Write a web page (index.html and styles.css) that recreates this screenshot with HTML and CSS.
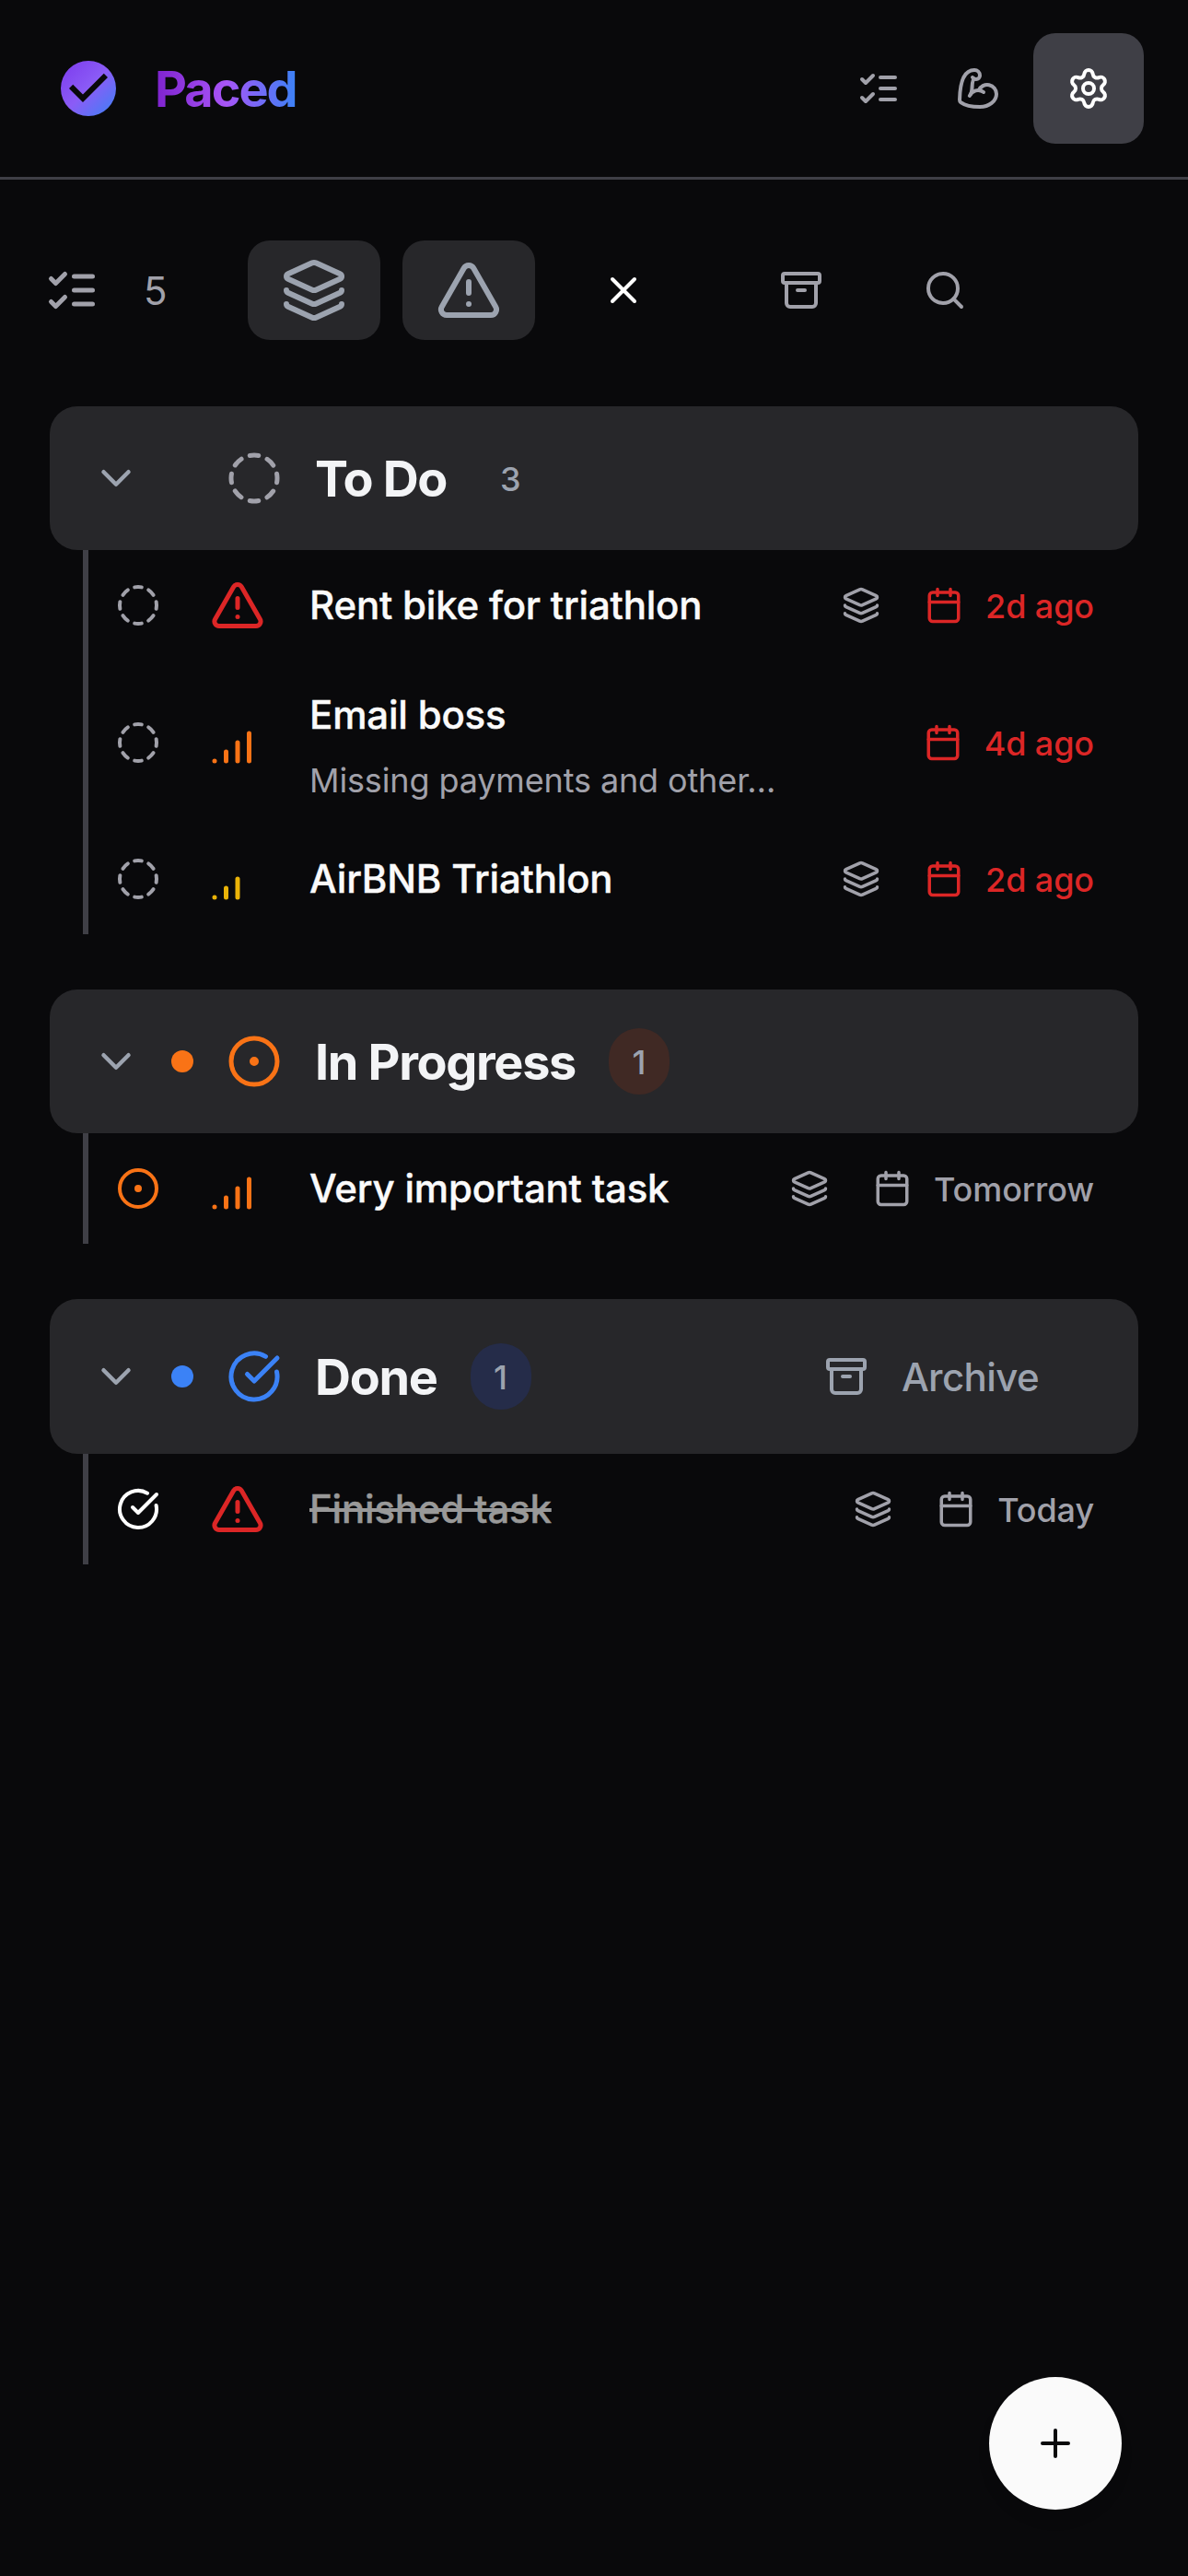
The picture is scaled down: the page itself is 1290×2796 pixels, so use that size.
FILE: index.html
```html
<!DOCTYPE html>
<html lang="en">
<head>
<meta charset="utf-8">
<title>Paced</title>
<link rel="stylesheet" href="styles.css">
</head>
<body>
<svg class="sprite" aria-hidden="true">
  <symbol id="list-checks" viewBox="0 0 24 24"><path d="m3 17 2 2 4-4M3 7l2 2 4-4M13 6h8M13 12h8M13 18h8"/></symbol>
  <symbol id="biceps" viewBox="0 0 24 24"><path d="M12.409 13.017A5 5 0 0 1 22 15c0 3.866-4 7-9 7-4.077 0-8.153-.82-10.371-2.462-.426-.316-.631-.832-.62-1.362C2.118 12.723 2.627 2 10 2a3 3 0 0 1 3 3 2 2 0 0 1-2 2c-1.105 0-1.64-.444-2-1"/><path d="M15 14a5 5 0 0 0-7.584 2"/><path d="M9.964 6.825C8.019 7.977 9.5 13 8 15"/></symbol>
  <symbol id="settings" viewBox="0 0 24 24"><path d="M9.671 4.136a2.34 2.34 0 0 1 4.659 0 2.34 2.34 0 0 0 3.319 1.915 2.34 2.34 0 0 1 2.33 4.033 2.34 2.34 0 0 0 0 3.831 2.34 2.34 0 0 1-2.33 4.033 2.34 2.34 0 0 0-3.319 1.915 2.34 2.34 0 0 1-4.659 0 2.34 2.34 0 0 0-3.32-1.915 2.34 2.34 0 0 1-2.33-4.033 2.34 2.34 0 0 0 0-3.831A2.34 2.34 0 0 1 6.35 6.051a2.34 2.34 0 0 0 3.319-1.915"/><circle cx="12" cy="12" r="3"/></symbol>
  <symbol id="layers" viewBox="0 0 24 24"><path d="M12.83 2.18a2 2 0 0 0-1.66 0L2.6 6.08a1 1 0 0 0 0 1.83l8.58 3.91a2 2 0 0 0 1.66 0l8.58-3.9a1 1 0 0 0 0-1.83z"/><path d="M2 12a1 1 0 0 0 .58.91l8.6 3.91a2 2 0 0 0 1.65 0l8.58-3.9A1 1 0 0 0 22 12"/><path d="M2 17a1 1 0 0 0 .58.91l8.6 3.91a2 2 0 0 0 1.65 0l8.58-3.9A1 1 0 0 0 22 17"/></symbol>
  <symbol id="alert" viewBox="0 0 24 24"><path d="m21.73 18-8-14a2 2 0 0 0-3.48 0l-8 14A2 2 0 0 0 4 21h16a2 2 0 0 0 1.73-3"/><path d="M12 9v4M12 17h.01"/></symbol>
  <symbol id="close" viewBox="0 0 24 24"><path d="M18 6 6 18M6 6l12 12"/></symbol>
  <symbol id="archive" viewBox="0 0 24 24"><rect width="20" height="5" x="2" y="3" rx="1"/><path d="M4 8v11a2 2 0 0 0 2 2h12a2 2 0 0 0 2-2V8M10 12h4"/></symbol>
  <symbol id="search" viewBox="0 0 24 24"><circle cx="11" cy="11" r="8"/><path d="m21 21-4.3-4.3"/></symbol>
  <symbol id="chevron" viewBox="0 0 24 24"><path d="m6 9 6 6 6-6"/></symbol>
  <symbol id="dashed" viewBox="0 0 24 24"><path d="M10.1 2.182a10 10 0 0 1 3.8 0M13.9 21.818a10 10 0 0 1-3.8 0M17.609 3.721a10 10 0 0 1 2.69 2.7M2.182 13.9a10 10 0 0 1 0-3.8M20.279 17.609a10 10 0 0 1-2.7 2.69M21.818 10.1a10 10 0 0 1 0 3.8M3.721 6.391a10 10 0 0 1 2.7-2.69M6.391 20.279a10 10 0 0 1-2.69-2.7"/></symbol>
  <symbol id="circle-dot" viewBox="0 0 24 24"><circle cx="12" cy="12" r="10"/><circle cx="12" cy="12" r="1"/></symbol>
  <symbol id="circle-check" viewBox="0 0 24 24"><path d="M21.801 10A10 10 0 1 1 17 3.335"/><path d="m9 11 3 3L22 4"/></symbol>
  <symbol id="signal-high" viewBox="0 0 24 24"><path d="M2 20h.01M7 20v-4M12 20v-8M17 20V8"/></symbol>
  <symbol id="signal-medium" viewBox="0 0 24 24"><path d="M2 20h.01M7 20v-4M12 20v-8"/></symbol>
  <symbol id="calendar" viewBox="0 0 24 24"><path d="M8 2v4M16 2v4"/><rect width="18" height="18" x="3" y="4" rx="2"/><path d="M3 10h18"/></symbol>
  <symbol id="plus" viewBox="0 0 24 24"><path d="M5 12h14M12 5v14"/></symbol>
</svg>

<header class="topbar">
  <div class="brand">
    <svg class="logo" viewBox="0 0 24 24">
      <defs><linearGradient id="logo-fill" x1="0" y1="0" x2="1" y2="1"><stop offset="0" stop-color="#7c3aed"/><stop offset=".5" stop-color="#8b5cf6"/><stop offset="1" stop-color="#3b82f6"/></linearGradient></defs>
      <path fill="url(#logo-fill)" d="M12 2a10 10 0 1 0 0 20 10 10 0 0 0 0-20zM10 17l-5-5 1.41-1.41L10 14.17l7.59-7.59L19 8z"/>
    </svg>
    <span class="brand-name">Paced</span>
  </div>
  <nav class="nav">
    <a class="nav-item"><svg class="icon s48"><use href="#list-checks"/></svg></a>
    <a class="nav-item"><svg class="icon s48"><use href="#biceps"/></svg></a>
    <a class="nav-item nav-item-active"><svg class="icon s48"><use href="#settings"/></svg></a>
  </nav>
</header>

<main class="page">
  <div class="toolbar">
    <svg class="icon s60"><use href="#list-checks"/></svg>
    <span class="total">5</span>
    <div class="filters">
      <button class="filter filter-on"><svg class="icon s72"><use href="#layers"/></svg></button>
      <button class="filter filter-on"><svg class="icon s72"><use href="#alert"/></svg></button>
      <button class="filter filter-clear"><svg class="icon s48"><use href="#close"/></svg></button>
    </div>
    <div class="tools">
      <button class="filter"><svg class="icon s48"><use href="#archive"/></svg></button>
      <button class="filter"><svg class="icon s48"><use href="#search"/></svg></button>
    </div>
  </div>

  <section class="group">
    <div class="group-head">
      <svg class="icon s54"><use href="#chevron"/></svg>
      <span class="dot"></span>
      <svg class="icon s60 muted"><use href="#dashed"/></svg>
      <h2 class="group-title">To Do</h2>
      <span class="count">3</span>
    </div>
    <ul class="tasks">
      <li class="task">
        <svg class="icon s48 muted"><use href="#dashed"/></svg>
        <svg class="icon s60 priority red"><use href="#alert"/></svg>
        <div class="task-text"><span class="task-title">Rent bike for triathlon</span></div>
        <svg class="icon s42 muted"><use href="#layers"/></svg>
        <span class="due red"><svg class="icon s42"><use href="#calendar"/></svg><span class="due-label">2d ago</span></span>
      </li>
      <li class="task task-tall">
        <svg class="icon s48 muted"><use href="#dashed"/></svg>
        <svg class="icon s60 priority orange"><use href="#signal-high"/></svg>
        <div class="task-text"><span class="task-title">Email boss</span><span class="task-note">Missing payments and other…</span></div>
        <span class="due red"><svg class="icon s42"><use href="#calendar"/></svg><span class="due-label">4d ago</span></span>
      </li>
      <li class="task">
        <svg class="icon s48 muted"><use href="#dashed"/></svg>
        <svg class="icon s60 priority yellow"><use href="#signal-medium"/></svg>
        <div class="task-text"><span class="task-title">AirBNB Triathlon</span></div>
        <svg class="icon s42 muted"><use href="#layers"/></svg>
        <span class="due red"><svg class="icon s42"><use href="#calendar"/></svg><span class="due-label">2d ago</span></span>
      </li>
    </ul>
  </section>

  <section class="group">
    <div class="group-head">
      <svg class="icon s54"><use href="#chevron"/></svg>
      <span class="dot dot-orange"></span>
      <svg class="icon s60 orange"><use href="#circle-dot"/></svg>
      <h2 class="group-title">In Progress</h2>
      <span class="count count-orange">1</span>
    </div>
    <ul class="tasks">
      <li class="task">
        <svg class="icon s48 orange"><use href="#circle-dot"/></svg>
        <svg class="icon s60 priority orange"><use href="#signal-high"/></svg>
        <div class="task-text"><span class="task-title">Very important task</span></div>
        <svg class="icon s42 muted"><use href="#layers"/></svg>
        <span class="due muted"><svg class="icon s42"><use href="#calendar"/></svg><span class="due-label">Tomorrow</span></span>
      </li>
    </ul>
  </section>

  <section class="group">
    <div class="group-head group-head-done">
      <svg class="icon s54"><use href="#chevron"/></svg>
      <span class="dot dot-blue"></span>
      <svg class="icon s60 blue"><use href="#circle-check"/></svg>
      <h2 class="group-title">Done</h2>
      <span class="count count-blue">1</span>
      <button class="archive"><svg class="icon s48"><use href="#archive"/></svg>Archive</button>
    </div>
    <ul class="tasks">
      <li class="task">
        <svg class="icon s48 white"><use href="#circle-check"/></svg>
        <svg class="icon s60 priority red"><use href="#alert"/></svg>
        <div class="task-text"><span class="task-title task-title-done">Finished task</span></div>
        <svg class="icon s42 muted"><use href="#layers"/></svg>
        <span class="due muted"><svg class="icon s42"><use href="#calendar"/></svg><span class="due-label">Today</span></span>
      </li>
    </ul>
  </section>
</main>

<button class="fab"><svg class="icon s48"><use href="#plus"/></svg></button>
</body>
</html>
```
FILE: styles.css
```css
* { box-sizing: border-box; }

body {
  margin: 0;
  min-height: 2796px;
  background: #09090b;
  color: #fafafa;
  font-family: Inter, "Liberation Sans", sans-serif;
}

button {
  margin: 0;
  padding: 0;
  border: 0;
  background: none;
  color: inherit;
  font: inherit;
}

.sprite { display: none; }

.icon {
  flex: none;
  display: block;
  fill: none;
  stroke: currentColor;
  stroke-width: 2;
  stroke-linecap: round;
  stroke-linejoin: round;
}
.s42 { width: 42px; height: 42px; }
.s48 { width: 48px; height: 48px; }
.s54 { width: 54px; height: 54px; }
.s60 { width: 60px; height: 60px; }
.s72 { width: 72px; height: 72px; }

.muted { color: #a1a1aa; }
.white { color: #fff; }
.blue { color: #3b82f6; }
.orange { color: #f97316; }
.yellow { color: #eab308; }
.red { color: #dc2626; }

/* Top bar */
.topbar {
  display: flex;
  align-items: center;
  justify-content: space-between;
  height: 195px;
  padding: 0 48px 0 60px;
  border-bottom: 3px solid #3f3f46;
}
.brand { display: flex; align-items: center; gap: 36px; }
.logo { display: block; width: 72px; height: 72px; }
.brand-name {
  padding-top: 1px;
  background: linear-gradient(to right, #7e22ce, #a855f7 50%, #3b82f6);
  -webkit-background-clip: text;
  background-clip: text;
  color: transparent;
  font-size: 54px;
  font-weight: 700;
  line-height: 84px;
  letter-spacing: -2px;
}
.nav { display: flex; align-items: center; gap: 12px; }
.nav-item {
  display: flex;
  align-items: center;
  justify-content: center;
  width: 96px;
  height: 120px;
  border-radius: 24px;
  color: #a1a1aa;
}
.nav-item-active { width: 120px; background: #3f3f46; color: #fff; }

.page { padding: 66px 54px 0; }

/* Filters */
.toolbar {
  display: flex;
  align-items: center;
  height: 108px;
  margin: 0 0 72px -6px;
  color: #a1a1aa;
}
.total {
  width: 112.5px;
  margin-left: 48px;
  padding-top: 1px;
  font-size: 42px;
  line-height: 60px;
}
.filters { display: flex; gap: 24px; color: #9ca3af; }
.tools { display: flex; gap: 12px; margin-left: 49.5px; }
.filter {
  display: flex;
  align-items: center;
  justify-content: center;
  width: 144px;
  height: 108px;
  border-radius: 24px;
}
.filter-on { background: #27272a; }
.filter-clear { color: #fff; }

/* Task groups */
.group { margin-bottom: 60px; }
.group-head {
  display: flex;
  align-items: center;
  height: 156px;
  padding: 0 54px 0 45px;
  border-radius: 30px;
  background: #27272a;
  color: #9ca3af;
}
.group-head-done { height: 168px; }
.dot { width: 24px; height: 24px; margin: 0 36px 0 33px; border-radius: 50%; }
.dot-orange { background: #f97316; }
.dot-blue { background: #3b82f6; }
.group-title {
  margin: 0 0 0 36px;
  padding-top: 2px;
  color: #f3f4f6;
  font-size: 54px;
  font-weight: 700;
  line-height: 82px;
  letter-spacing: -1.35px;
}
.count {
  min-width: 66px;
  margin-left: 36px;
  padding: 13px 22px 11px;
  border-radius: 999px;
  font-size: 36px;
  font-weight: 500;
  line-height: 48px;
  text-align: center;
}
.count-orange { background: #402924; }
.count-blue { background: #252c49; }
.archive {
  display: flex;
  align-items: center;
  gap: 36px;
  margin-left: auto;
  margin-right: 54px;
  font-size: 42px;
  font-weight: 500;
  letter-spacing: -.6px;
}

.tasks {
  margin: 0 0 0 36px;
  padding: 0;
  border-left: 6px solid #3f3f46;
  list-style: none;
}
.task {
  display: flex;
  align-items: center;
  height: 120px;
  padding: 0 48px 0 30px;
}
.task-tall { height: 177px; }
.priority { margin-left: 54px; }
.task-text {
  display: flex;
  flex: 1;
  flex-direction: column;
  align-items: flex-start;
  gap: 13px;
  margin-left: 48px;
}
.task-title {
  color: #fafafa;
  font-size: 42px;
  font-weight: 500;
  line-height: 70px;
  letter-spacing: -.2px;
  -webkit-text-stroke: .4px currentColor;
}
.task-title-done { color: #999; text-decoration: line-through; }
.task-note {
  color: #a1a1aa;
  font-size: 36px;
  line-height: 46px;
  letter-spacing: -.13px;
}
.due {
  display: flex;
  align-items: center;
  gap: 24px;
  margin-left: 48px;
  font-size: 36px;
  font-weight: 500;
  letter-spacing: -.1px;
}
.due-label { padding-top: 2px; }

/* Floating add button */
.fab {
  position: fixed;
  right: 72px;
  bottom: 72px;
  display: flex;
  align-items: center;
  justify-content: center;
  width: 144px;
  height: 144px;
  border-radius: 50%;
  background: #fafafa;
  box-shadow: 0 12px 18px -4px rgba(0, 0, 0, .1);
  color: #09090b;
}
```
